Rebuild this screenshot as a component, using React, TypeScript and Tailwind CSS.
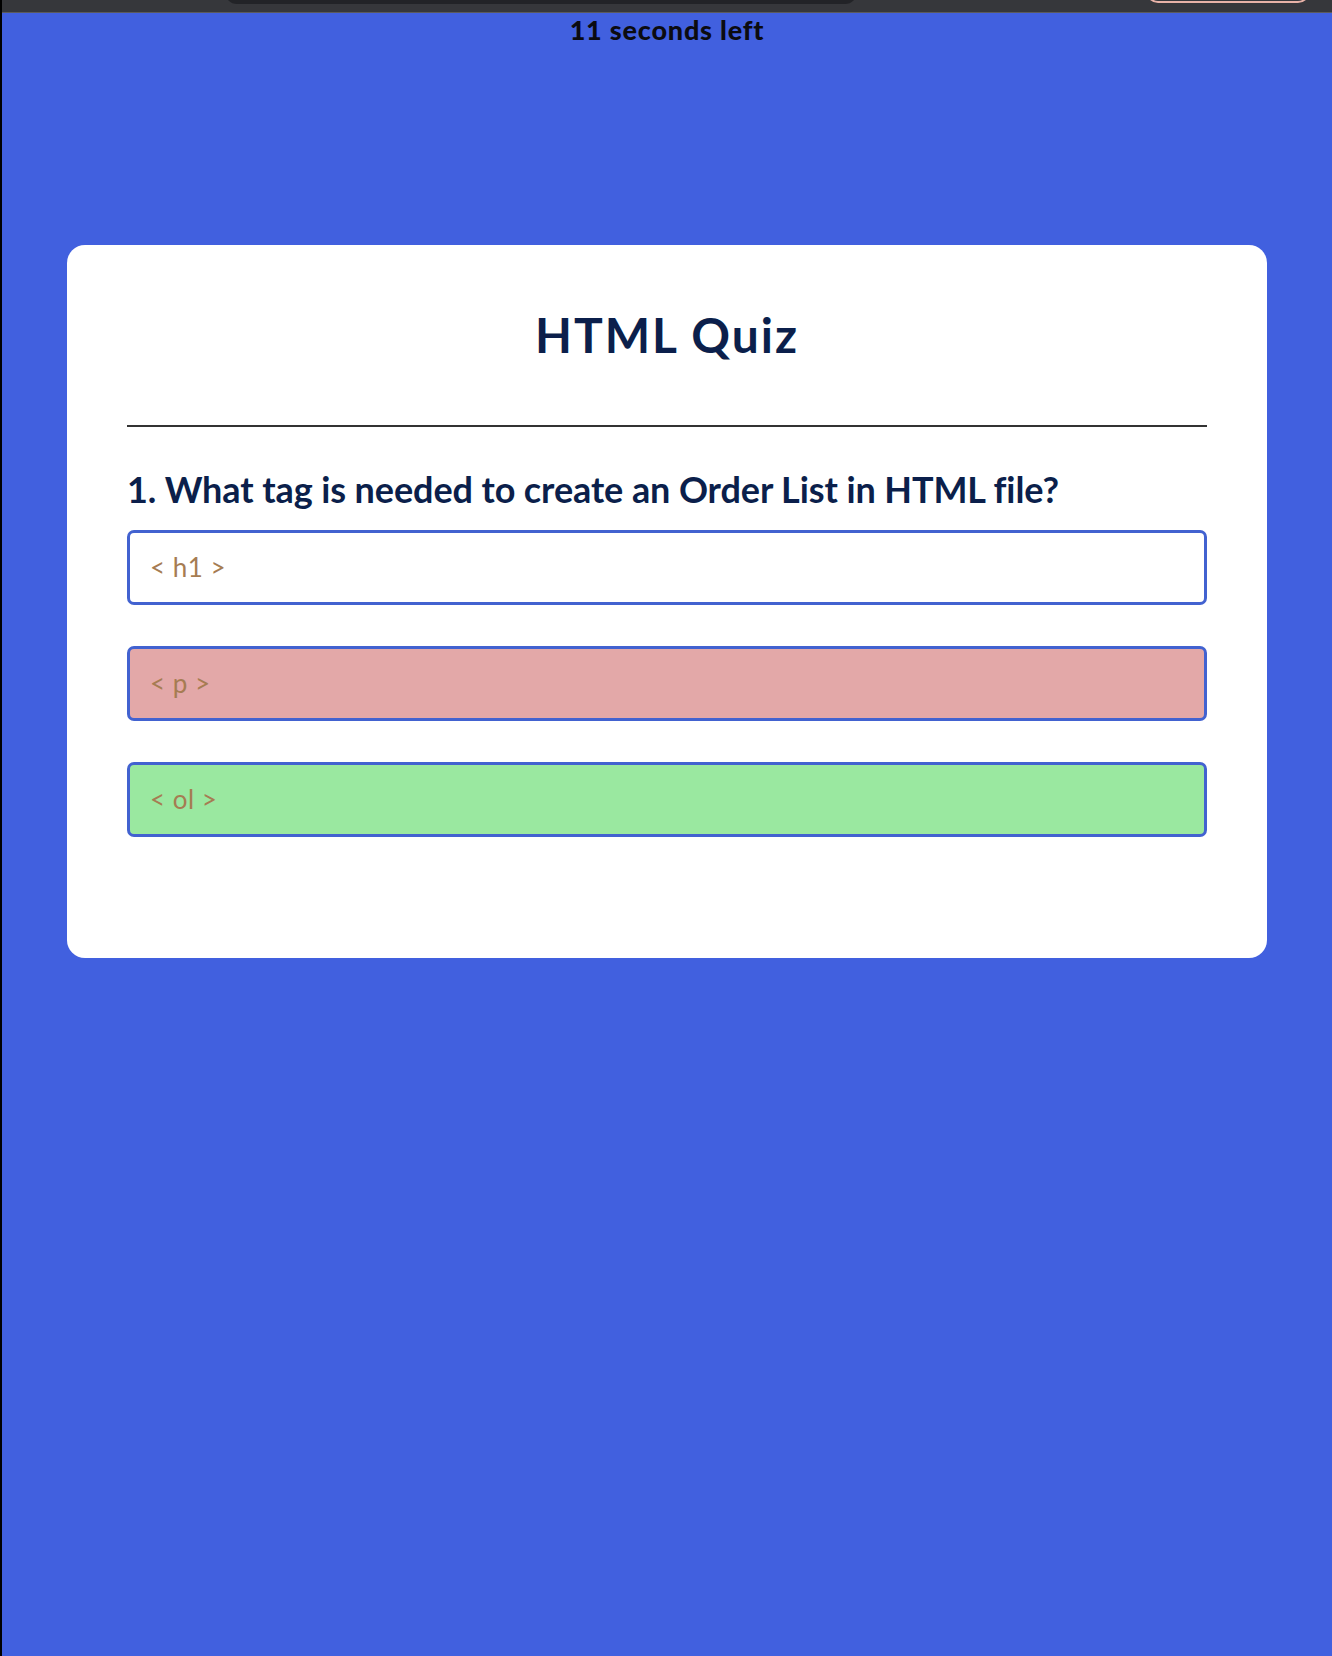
import React from "react";

const options = [
  { label: "< h1 >", bg: "bg-white" },
  { label: "< p >", bg: "bg-[#e3a8a8]" },
  { label: "< ol >", bg: "bg-[#9ae8a0]" },
];

export default function App() {
  return (
    <div
      className="min-h-[1656px] bg-[#4160df] border-l-2 border-black flex flex-col"
      style={{ fontFamily: "Lato, 'Open Sans', sans-serif" }}
    >
      <div className="relative h-[12px] bg-[#36373b] overflow-hidden">
        <div className="absolute left-[223px] top-[-20px] w-[632px] h-[24px] rounded-full bg-[#222327]" />
        <div className="absolute left-[1144px] top-[-24px] w-[164px] h-[27px] rounded-[12px] border-2 border-[#e8b2a8]" />
      </div>
      <div className="h-px bg-[#5b5b5d]" />
      <p className="text-center text-[27px] font-black leading-none tracking-[0.8px] text-[#0b0b10] mt-[3px]">
        11 seconds left
      </p>
      <div className="mx-auto mt-[202px] w-[1200px] bg-white rounded-[18px] px-[60px] pt-[66px] pb-[121px]">
        <h1 className="text-center text-[48px] font-bold leading-none tracking-[2px] text-[#0b1f4b]">HTML Quiz</h1>
        <div className="mt-[66px] h-[2px] bg-[#333333]" />
        <h2 className="mt-[44px] text-[36px] font-bold leading-none tracking-[-0.1px] text-[#0b1f4b]">
          1. What tag is needed to create an Order List in HTML file?
        </h2>
        <div className="mt-[23px] flex flex-col gap-[41px]">
          {options.map((o) => (
            <div
              key={o.label}
              className={`h-[75px] rounded-[7px] border-[3px] border-[#4262d0] ${o.bg} flex items-center pl-[20px] text-[26px] tracking-[0.5px] text-[#a67c52]`}
            >
              {o.label}
            </div>
          ))}
        </div>
      </div>
    </div>
  );
}
